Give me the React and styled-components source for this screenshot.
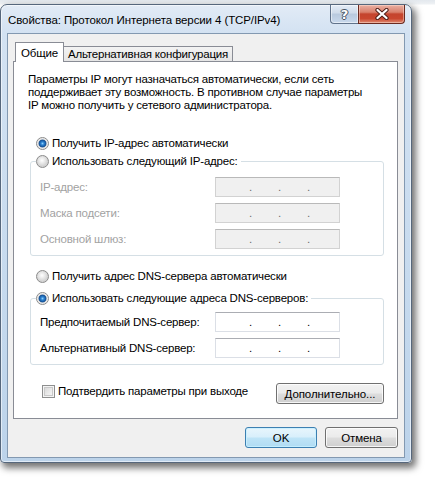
import React from 'react';
import styled, { createGlobalStyle } from 'styled-components';

const Global = createGlobalStyle`
  html, body { margin: 0; padding: 0; }
  body {
    background: #ffffff;
    font-family: "Liberation Sans", Arial, sans-serif;
    font-size: 11.5px;
    letter-spacing: -0.2px;
    color: #000;
  }
`;

const Desktop = styled.div`
  width: 435px;
  height: 477px;
  overflow: hidden;
  box-sizing: border-box;
  padding-top: 4px;
  background: linear-gradient(#e3e8ee 0, #eef1f4 4px, #ffffff 5px);
`;

const Window = styled.div`
  width: 412px;
  height: 459px;
  box-sizing: border-box;
  border: 1px solid #56677c;
  border-radius: 7px 7px 4px 4px;
  background: linear-gradient(180deg, #e2ebf6 0px, #d3e2f2 28px, #c6daee 60%, #bcd3ea 100%);
  box-shadow: inset 0 0 0 1px rgba(255, 255, 255, 0.55), 3px 4px 7px 1px rgba(0, 0, 0, 0.55);
  display: flex;
  flex-direction: column;
  padding: 0 6px 4px 6px;
`;

const TitleBar = styled.div`
  height: 28px;
  display: flex;
  align-items: flex-start;
  justify-content: space-between;
`;

const Title = styled.div`
  margin-left: 1px;
  padding-top: 7px;
  line-height: 16px;
  font-size: 11.5px;
  letter-spacing: -0.1px;
  color: #000;
  white-space: nowrap;
`;

const CaptionButtons = styled.div`
  display: flex;
  height: 19px;
`;

const HelpButton = styled.div`
  width: 28px;
  height: 19px;
  box-sizing: border-box;
  border: 1px solid #61738b;
  border-top: none;
  border-right: none;
  border-radius: 0 0 0 4px;
  background: linear-gradient(180deg, #e4ecf6 0%, #cfdbea 45%, #b8c9de 50%, #c9d9ec 100%);
  box-shadow: inset 0 0 0 1px rgba(255, 255, 255, 0.5);
  display: flex;
  align-items: center;
  justify-content: center;
  font-family: "DejaVu Sans", sans-serif;
  font-weight: bold;
  font-size: 13px;
  letter-spacing: 0;
  color: #fff;
  text-shadow: 0 0 1px #4a5565, 1px 0 0 #4a5565, -1px 0 0 #4a5565, 0 1px 0 #4a5565, 0 -1px 0 #4a5565;
`;

const CloseButton = styled.div`
  width: 47px;
  height: 19px;
  box-sizing: border-box;
  border: 1px solid #6b2a20;
  border-top: none;
  border-radius: 0 0 4px 0;
  background: linear-gradient(180deg, #eab0a3 0%, #d9806c 40%, #c4442e 50%, #c9472f 75%, #e08a72 100%);
  box-shadow: inset 0 0 0 1px rgba(255, 230, 220, 0.45);
  display: flex;
  align-items: center;
  justify-content: center;
`;

const Client = styled.div`
  flex: 1;
  box-sizing: border-box;
  background: #f0f0f0;
  border: 1px solid #8399b1;
  padding: 8px 0 0 5px;
  display: flex;
  flex-direction: column;
`;

const Tabs = styled.div`
  position: relative;
  z-index: 1;
  height: 20px;
  display: flex;
  align-items: flex-end;
  padding-left: 2px;
`;

const Tab = styled.div`
  box-sizing: border-box;
  height: ${(p) => (p.$active ? 20 : 15)}px;
  margin-bottom: ${(p) => (p.$active ? 0 : 1)}px;
  width: ${(p) => (p.$active ? 49 : 169)}px;
  border: 1px solid #898c95;
  border-bottom: none;
  ${(p) => (p.$active ? '' : 'border-left: none;')}
  background: ${(p) => (p.$active ? '#ffffff' : 'linear-gradient(#f3f3f3, #e5e5e5)')};
  display: flex;
  align-items: center;
  justify-content: ${(p) => (p.$active ? 'center' : 'flex-start')};
  padding-left: ${(p) => (p.$active ? 0 : 4)}px;
  line-height: 14px;
  white-space: nowrap;
`;

const Panel = styled.div`
  width: 385px;
  margin-top: -1px;
  box-sizing: border-box;
  background: #fff;
  border: 1px solid #898c95;
  padding: 11px 0 14px 0;
  display: flex;
  flex-direction: column;
`;

const Intro = styled.div`
  margin: 0 0 0 14px;
  display: flex;
  flex-direction: column;
`;

const IntroLine = styled.span`
  height: 13px;
  line-height: 13px;
  white-space: nowrap;
`;

const RadioRow = styled.div`
  margin: ${(p) => p.$mt}px 0 0 22px;
  height: 16px;
  display: flex;
  align-items: center;
  gap: 3px;
  line-height: 16px;
  white-space: nowrap;
`;

const RadioDot = styled.span`
  flex: none;
  width: 13px;
  height: 13px;
  box-sizing: border-box;
  border-radius: 50%;
  border: 1px solid #8b8b8b;
  background: ${(p) =>
    p.$checked
      ? 'radial-gradient(circle at 50% 50%, #8fd0f7 0px, #2f86d6 1.5px, #144f93 3.5px, #dcdcdc 4.3px, #f5f5f5 5.5px)'
      : 'radial-gradient(circle at 45% 40%, #ffffff 0px, #f0f0f0 2px, #d4d4d4 5.5px)'};
`;

const Group = styled.fieldset`
  margin: ${(p) => p.$mt}px 0 0 16px;
  width: 354px;
  box-sizing: border-box;
  border: 1px solid #d5dfe5;
  border-radius: 3px;
  padding: ${(p) => p.$pt}px 0 6px 0;
  min-inline-size: 0;
  display: flex;
  flex-direction: column;
  gap: 6px;
`;

const Legend = styled.legend`
  margin-left: 5px;
  padding: 0 3px 0 0;
  height: 16px;
  display: flex;
  align-items: center;
  gap: 3px;
  line-height: 16px;
  white-space: nowrap;
`;

const FieldRow = styled.div`
  display: flex;
  align-items: center;
  padding-left: 9px;
  height: 20px;
`;

const FieldLabel = styled.span`
  width: 175px;
  color: ${(p) => (p.$disabled ? '#a2a2a2' : '#000')};
  white-space: nowrap;
`;

const IpField = styled.div`
  width: 125px;
  height: 20px;
  box-sizing: border-box;
  border: 1px solid ${(p) => (p.$disabled ? '#d2d2d2' : '#dbdfe6')};
  border-top-color: ${(p) => (p.$disabled ? '#b9b9b9' : '#abadb3')};
  background: ${(p) => (p.$disabled ? '#f0f0f0' : '#ffffff')};
  color: ${(p) => (p.$disabled ? '#6d6d6d' : '#000')};
  display: flex;
  align-items: center;
  padding-left: 33px;
  gap: 26px;
  line-height: 16px;
`;

const Dot = styled.span`
  display: inline-block;
`;

const BottomRow = styled.div`
  margin-top: 18px;
  height: 21px;
  display: flex;
  align-items: flex-start;
  justify-content: space-between;
  padding: 0 13px 0 28px;
`;

const CheckLabel = styled.div`
  display: flex;
  align-items: center;
  gap: 3px;
  height: 16px;
  line-height: 16px;
  white-space: nowrap;
`;

const CheckBox = styled.span`
  flex: none;
  width: 13px;
  height: 13px;
  box-sizing: border-box;
  border: 1px solid #8e8f8f;
  background: linear-gradient(135deg, #d2d2d2 0%, #ececec 60%, #f8f8f8 100%);
  box-shadow: inset 0 0 0 1px #f4f4f4, inset 0 0 0 2px #c9c9c9;
`;

const Button = styled.button`
  width: ${(p) => p.$w}px;
  height: 21px;
  box-sizing: border-box;
  padding: 0;
  font-family: inherit;
  font-size: 11.5px;
  letter-spacing: -0.1px;
  color: #000;
  line-height: 16px;
  border: 1px solid ${(p) => (p.$default ? '#3c7fb1' : '#707070')};
  border-radius: 3px;
  background: ${(p) =>
    p.$default
      ? 'linear-gradient(#e8f5fc 0%, #d8effb 48%, #bfe4f7 52%, #b0dcf3 100%)'
      : 'linear-gradient(#f2f2f2 0%, #ebebeb 48%, #dddddd 52%, #cfcfcf 100%)'};
  box-shadow: inset 0 0 0 1px ${(p) => (p.$default ? 'rgba(200, 240, 255, 0.9)' : 'rgba(255, 255, 255, 0.8)')};
`;

const DialogButtons = styled.div`
  width: 385px;
  margin-top: 8px;
  display: flex;
  justify-content: flex-end;
  gap: 8px;
`;

const IpInput = ({ disabled }) => (
  <IpField $disabled={disabled}>
    <Dot>.</Dot>
    <Dot>.</Dot>
    <Dot>.</Dot>
  </IpField>
);

export default function App() {
  return (
    <>
      <Global />
      <Desktop>
        <Window>
          <TitleBar>
            <Title>Свойства: Протокол Интернета версии 4 (TCP/IPv4)</Title>
            <CaptionButtons>
              <HelpButton>?</HelpButton>
              <CloseButton>
                <svg width="14" height="12" viewBox="0 0 14 12">
                  <path d="M2.5 2 L11.5 10 M11.5 2 L2.5 10" stroke="#4b1d17" strokeWidth="4.2" strokeLinecap="round" />
                  <path d="M2.5 2 L11.5 10 M11.5 2 L2.5 10" stroke="#ffffff" strokeWidth="2.3" strokeLinecap="round" />
                </svg>
              </CloseButton>
            </CaptionButtons>
          </TitleBar>
          <Client>
            <Tabs>
              <Tab $active>Общие</Tab>
              <Tab>Альтернативная конфигурация</Tab>
            </Tabs>
            <Panel>
              <Intro>
                <IntroLine>Параметры IP могут назначаться автоматически, если сеть</IntroLine>
                <IntroLine>поддерживает эту возможность. В противном случае параметры</IntroLine>
                <IntroLine>IP можно получить у сетевого администратора.</IntroLine>
              </Intro>
              <RadioRow $mt={23}>
                <RadioDot $checked />
                Получить IP-адрес автоматически
              </RadioRow>
              <Group $mt={2} $pt={8}>
                <Legend>
                  <RadioDot />
                  Использовать следующий IP-адрес:
                </Legend>
                <FieldRow>
                  <FieldLabel $disabled>IP-адрес:</FieldLabel>
                  <IpInput disabled />
                </FieldRow>
                <FieldRow>
                  <FieldLabel $disabled>Маска подсети:</FieldLabel>
                  <IpInput disabled />
                </FieldRow>
                <FieldRow>
                  <FieldLabel $disabled>Основной шлюз:</FieldLabel>
                  <IpInput disabled />
                </FieldRow>
              </Group>
              <RadioRow $mt={12}>
                <RadioDot />
                Получить адрес DNS-сервера автоматически
              </RadioRow>
              <Group $mt={6} $pt={6}>
                <Legend>
                  <RadioDot $checked />
                  Использовать следующие адреса DNS-серверов:
                </Legend>
                <FieldRow>
                  <FieldLabel>Предпочитаемый DNS-сервер:</FieldLabel>
                  <IpInput />
                </FieldRow>
                <FieldRow>
                  <FieldLabel>Альтернативный DNS-сервер:</FieldLabel>
                  <IpInput />
                </FieldRow>
              </Group>
              <BottomRow>
                <CheckLabel>
                  <CheckBox />
                  Подтвердить параметры при выходе
                </CheckLabel>
                <Button $w={108}>Дополнительно...</Button>
              </BottomRow>
            </Panel>
            <DialogButtons>
              <Button $default $w={72}>OK</Button>
              <Button $w={73}>Отмена</Button>
            </DialogButtons>
          </Client>
        </Window>
      </Desktop>
    </>
  );
}
